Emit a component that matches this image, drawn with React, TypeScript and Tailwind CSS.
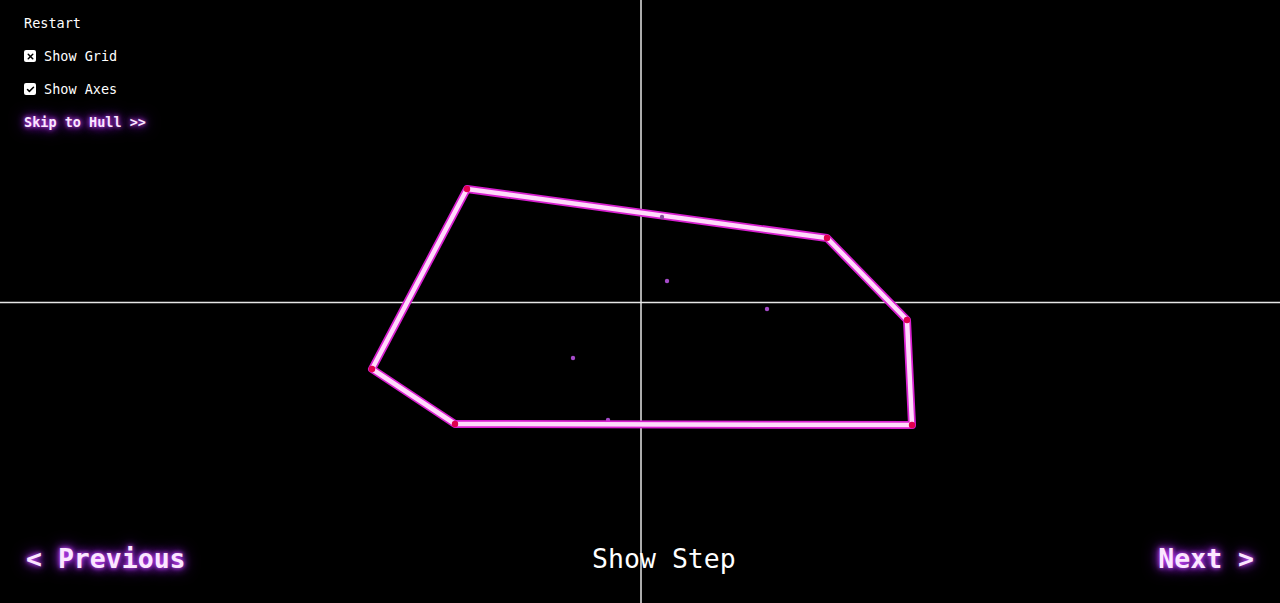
import { Check, X } from 'lucide-react';

const hull = [
  [467, 189],
  [827, 238],
  [907, 320],
  [912, 425],
  [455, 424],
  [372, 369],
];

const inner = [
  [667, 281],
  [767, 309],
  [573, 358],
  [608, 420],
];

const glow = '[text-shadow:0_0_4px_#d14dff,0_0_10px_#a62cff,0_0_16px_#8a1fd6]';

export default function App() {
  const pts = hull.map((p) => p.join(',')).join(' ');

  return (
    <div className="relative w-full h-[603px] bg-black overflow-hidden text-white font-['DejaVu_Sans_Mono',monospace]">
      <svg className="absolute inset-0" width={1280} height={603}>
        <line x1={641} y1={0} x2={641} y2={603} stroke="#e6e6e6" strokeWidth={1.5} />
        <line x1={0} y1={302.5} x2={1280} y2={302.5} stroke="#e6e6e6" strokeWidth={1.5} />
        {inner.map(([x, y], i) => (
          <circle key={i} cx={x} cy={y} r={2.2} fill="#a54bc9" />
        ))}
        <polygon points={pts} fill="none" stroke="#d81fd0" strokeWidth={8} strokeLinejoin="round" />
        <polygon points={pts} fill="none" stroke="#ffd9fb" strokeWidth={4.5} strokeLinejoin="round" />
        <circle cx={662} cy={217} r={2.2} fill="#8a4f9e" />
        {hull.map(([x, y], i) => (
          <circle key={i} cx={x} cy={y} r={3.2} fill="#e0004e" />
        ))}
      </svg>

      <div className="relative flex flex-col justify-between h-full">
        <div className="flex flex-col items-start gap-[15px] pl-6 pt-[14px] text-[13.5px] leading-[18px]">
          <button className="text-white">Restart</button>
          <label className="flex items-center gap-2">
            <span className="w-[12px] h-[12px] bg-white rounded-[2px] flex items-center justify-center text-black">
              <X className="w-[9px] h-[9px]" strokeWidth={4} />
            </span>
            Show Grid
          </label>
          <label className="flex items-center gap-2">
            <span className="w-[12px] h-[12px] bg-white rounded-[2px] flex items-center justify-center text-black">
              <Check className="w-[9px] h-[9px]" strokeWidth={4} />
            </span>
            Show Axes
          </label>
          <button className={`font-bold text-[#fbe6ff] ${glow}`}>Skip to Hull &gt;&gt;</button>
        </div>

        <div className="flex items-center justify-between px-[26px] pb-[26px] text-[26.5px] leading-[36px]">
          <button className={`font-bold text-[#fbe6ff] ${glow}`}>&lt; Previous</button>
          <span className="mr-[16px]">Show Step</span>
          <button className={`font-bold text-[#fbe6ff] ${glow}`}>Next &gt;</button>
        </div>
      </div>
    </div>
  );
}
